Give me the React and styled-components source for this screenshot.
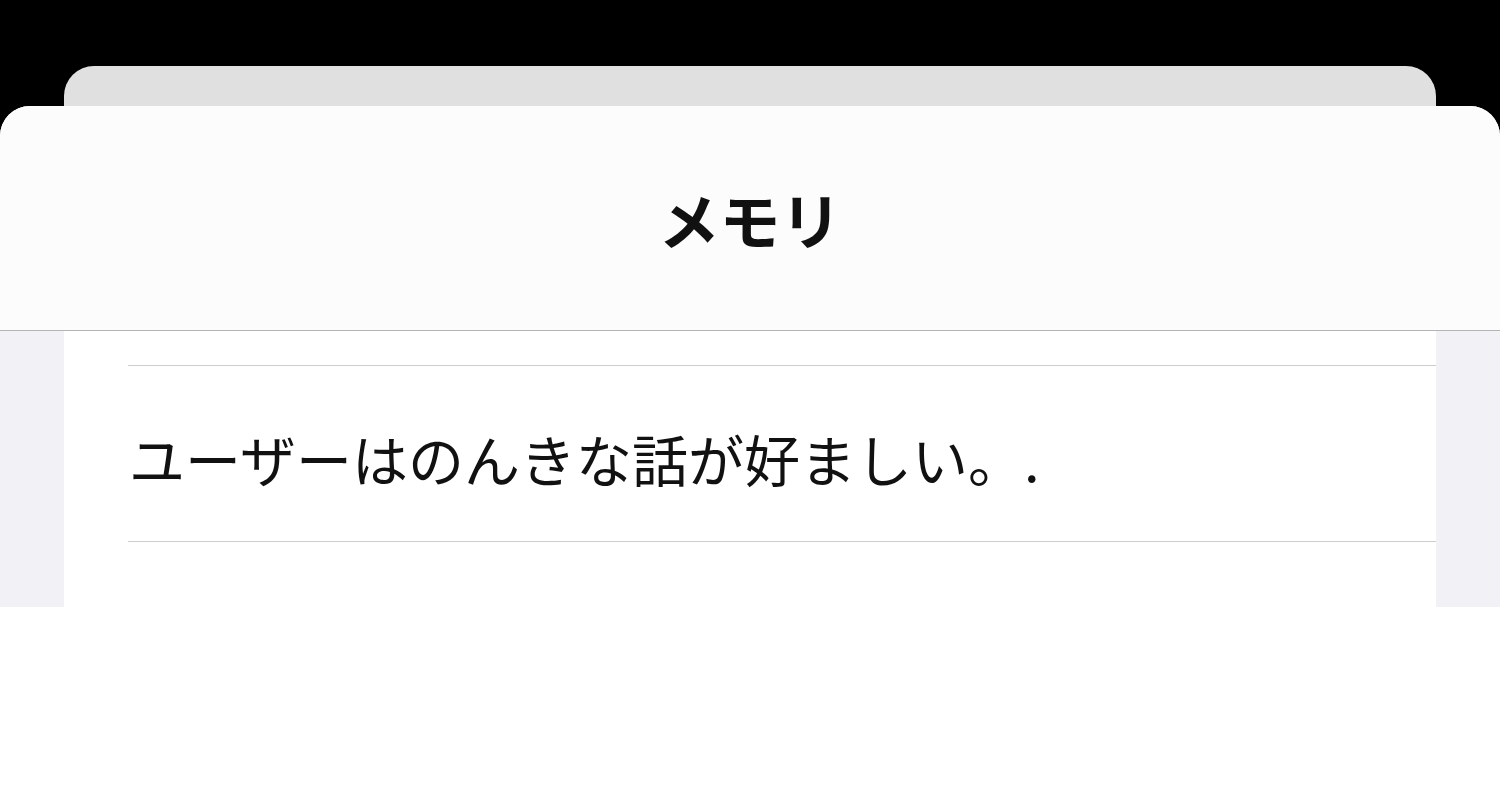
import React from 'react';
import styled, { createGlobalStyle } from 'styled-components';

const GlobalStyle = createGlobalStyle`
  html, body {
    margin: 0;
    padding: 0;
    background: #000;
    overflow: hidden;
  }
  body {
    font-family: "Noto Sans CJK JP", "Noto Sans", sans-serif;
    -webkit-font-smoothing: antialiased;
  }
`;

const Stage = styled.div`
  height: 785px;
  box-sizing: border-box;
  padding-top: 66px;
  display: flex;
  flex-direction: column;
  background: #000;
`;

const BackSheet = styled.div`
  height: 40px;
  flex: none;
  margin: 0 64px;
  background: #e0e0e0;
  border-radius: 30px 30px 0 0;
`;

const Sheet = styled.div`
  flex: 1;
  display: flex;
  flex-direction: column;
  background: #fff;
  border-radius: 30px 30px 0 0;
  overflow: hidden;
`;

const Header = styled.header`
  height: 224px;
  flex: none;
  display: flex;
  align-items: center;
  justify-content: center;
  background: #fcfcfc;
  border-bottom: 1px solid #b4b4b4;
`;

const Title = styled.h1`
  margin: 0;
  font-size: 61px;
  font-weight: 700;
  color: #111;
  letter-spacing: 0;
`;

const Body = styled.div`
  height: 276px;
  flex: none;
  padding: 0 64px;
  background: #f2f2f6;
`;

const List = styled.ul`
  list-style: none;
  margin: 0;
  height: 100%;
  padding: 34px 0 0 64px;
  background: #fff;
  box-sizing: border-box;
`;

const Row = styled.li`
  height: 177px;
  display: flex;
  align-items: center;
  padding: 8px 0 0 1px;
  box-sizing: border-box;
  border-top: 1px solid #cdcdcd;
  border-bottom: 1px solid #cdcdcd;
  font-size: 56px;
  color: #111;
  white-space: nowrap;
`;

const memories = ['ユーザーはのんきな話が好ましい。.'];

export default function App() {
  return (
    <>
      <GlobalStyle />
      <Stage>
        <BackSheet />
        <Sheet>
          <Header>
            <Title>メモリ</Title>
          </Header>
          <Body>
            <List>
              {memories.map((text) => (
                <Row key={text}>{text}</Row>
              ))}
            </List>
          </Body>
        </Sheet>
      </Stage>
    </>
  );
}
